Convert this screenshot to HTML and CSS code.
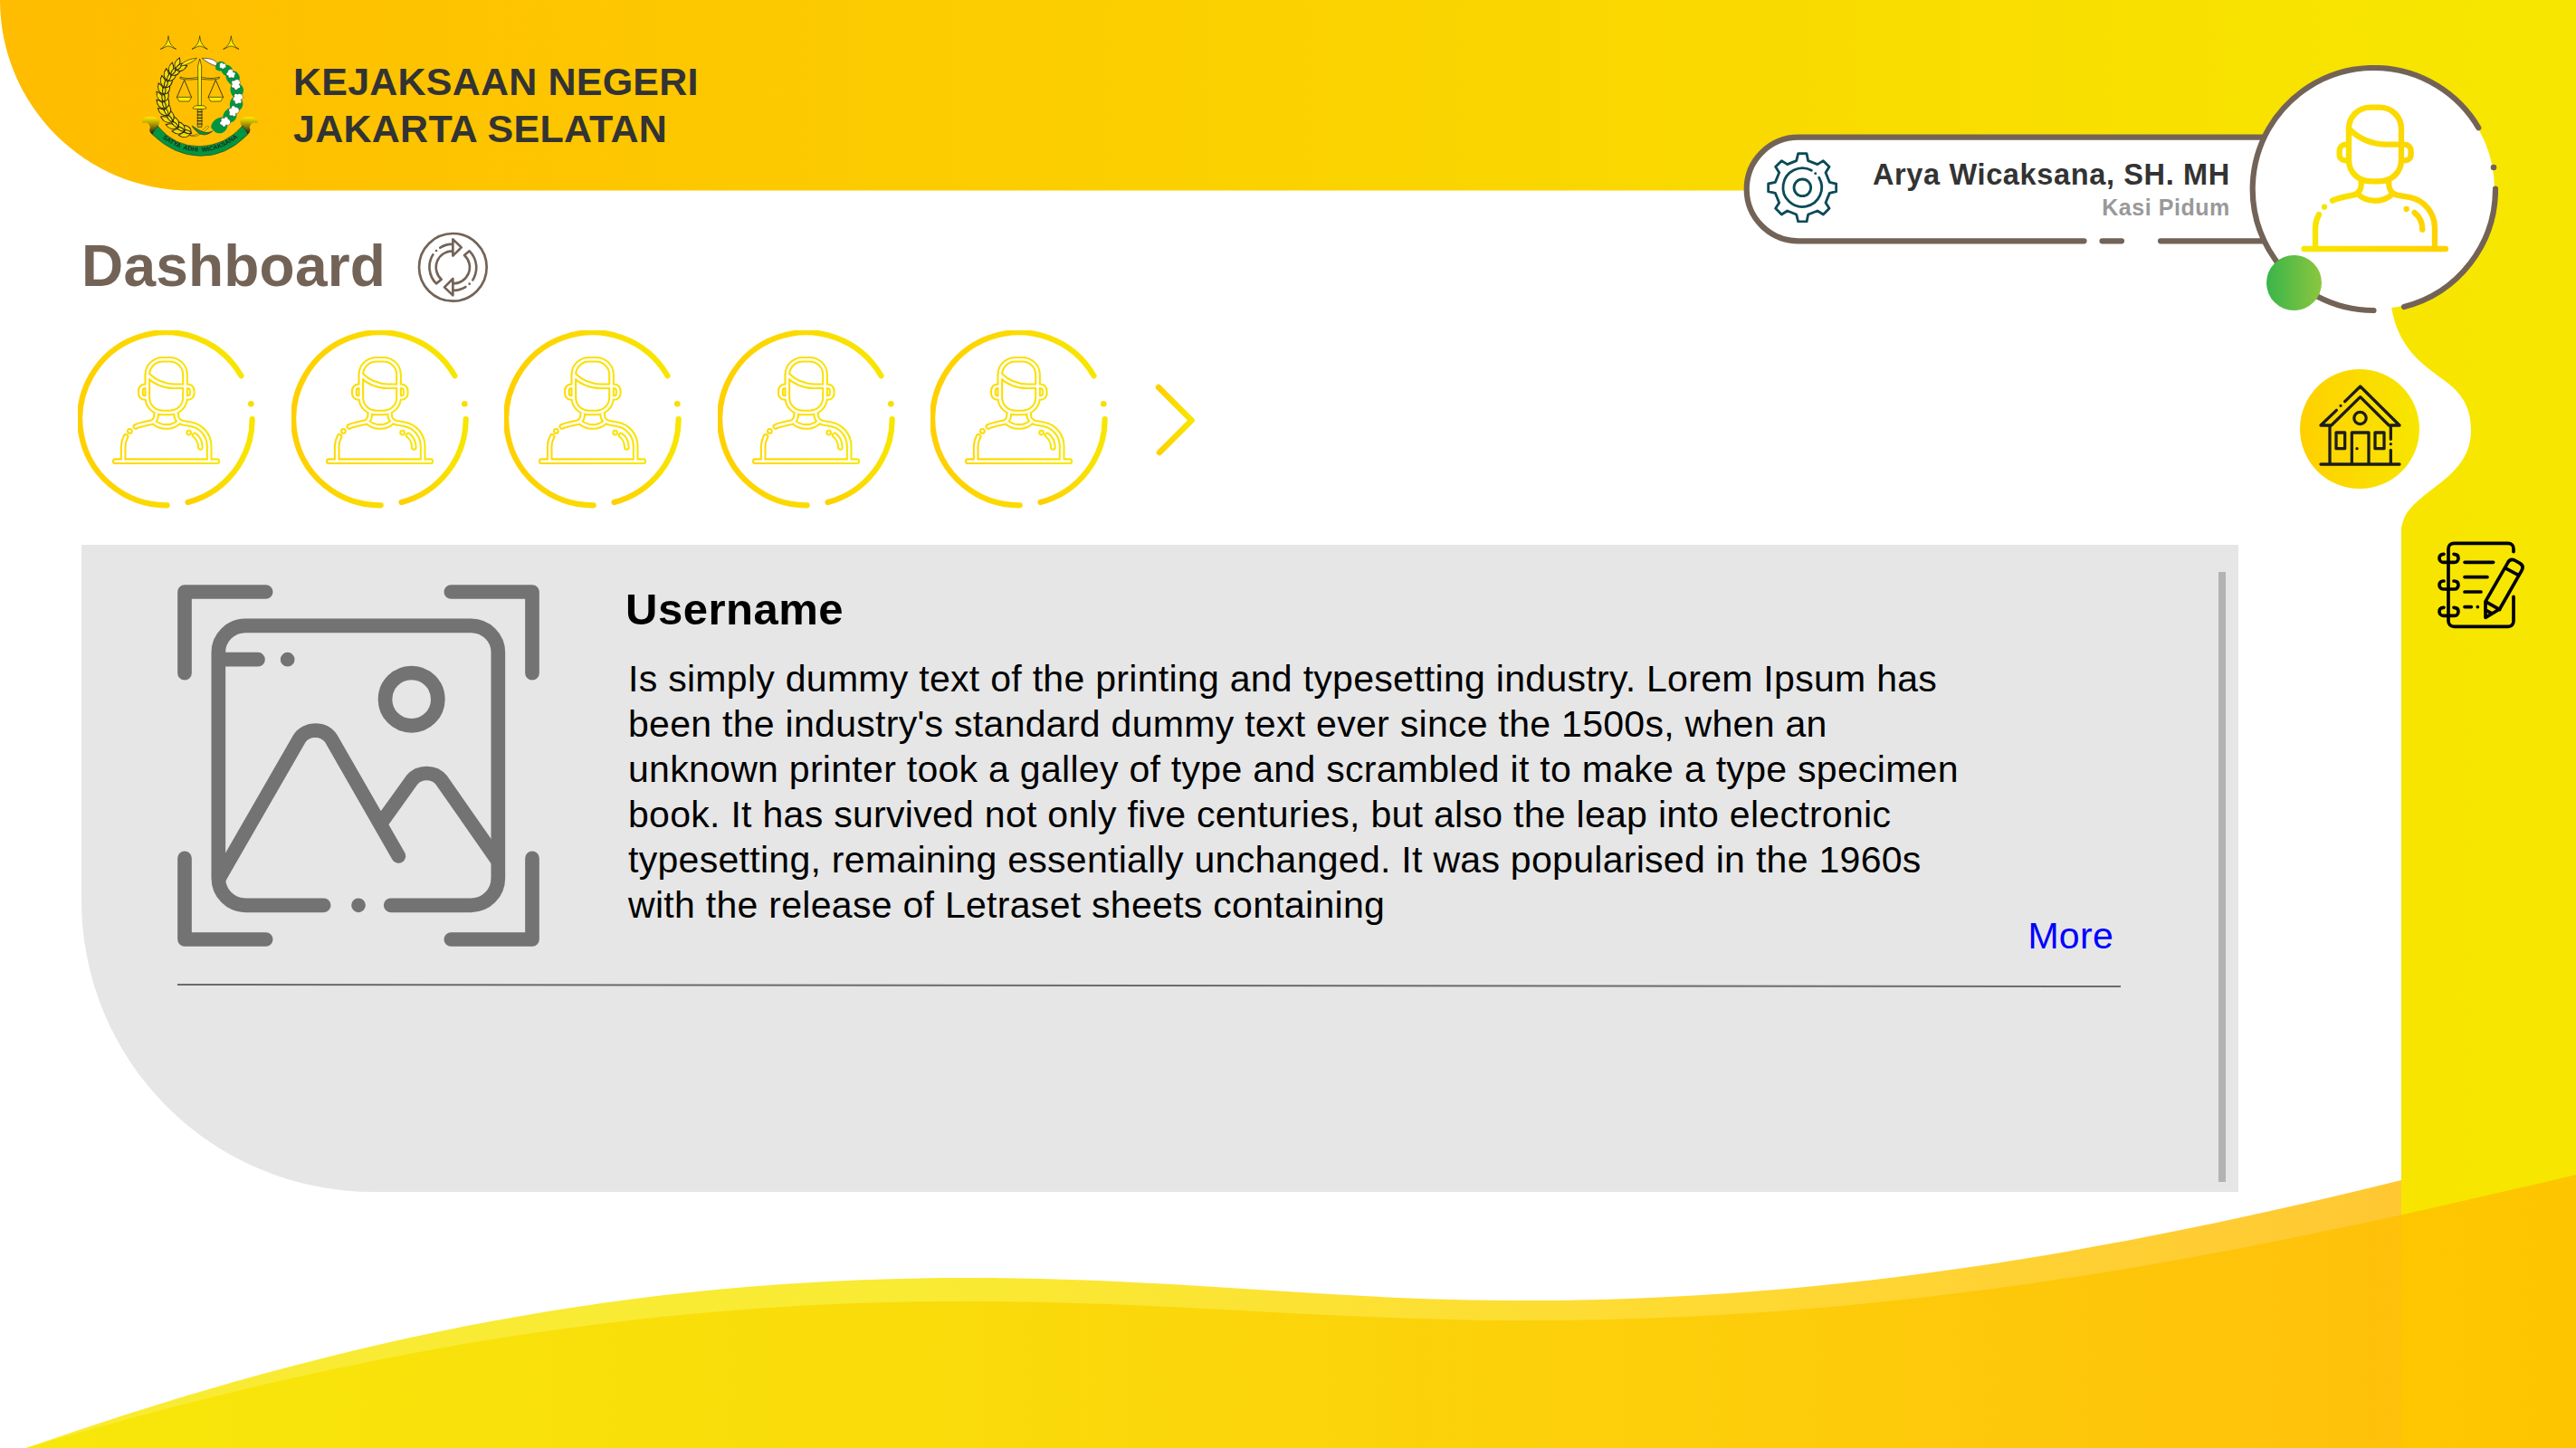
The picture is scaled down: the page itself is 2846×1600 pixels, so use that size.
FILE: index.html
```html
<!DOCTYPE html>
<html lang="id">
<head>
<meta charset="utf-8">
<title>Dashboard - Kejaksaan Negeri Jakarta Selatan</title>
<link rel="stylesheet" href="styles.css">
</head>
<body>
<svg class="backdrop" viewBox="0 0 2846 1600" aria-hidden="true">
  <defs>
    <linearGradient id="g-head" gradientUnits="userSpaceOnUse" x1="0" y1="0" x2="2750" y2="0"><stop offset="0" stop-color="#ffbc00"/><stop offset="1" stop-color="#f7e600"/></linearGradient>
    <linearGradient id="g-wave" gradientUnits="userSpaceOnUse" x1="29" y1="0" x2="2800" y2="0"><stop offset="0" stop-color="#f7e600"/><stop offset="1" stop-color="#ffbd00"/></linearGradient>
    <linearGradient id="g-back" gradientUnits="userSpaceOnUse" x1="29" y1="0" x2="2653" y2="0"><stop offset="0" stop-color="#f7e600"/><stop offset=".38" stop-color="#f8e500"/><stop offset=".71" stop-color="#fed000"/><stop offset="1" stop-color="#ffba00"/></linearGradient>
    <linearGradient id="g-ring"><stop offset="0" stop-color="#ffd000"/><stop offset="1" stop-color="#f7e600"/></linearGradient>
    <linearGradient id="g-small" gradientUnits="userSpaceOnUse" x1="300" y1="0" x2="800" y2="0"><stop offset="0" stop-color="#ffd800"/><stop offset="1" stop-color="#f7e600"/></linearGradient>
    <linearGradient id="g-big" gradientUnits="userSpaceOnUse" x1="310" y1="0" x2="790" y2="0"><stop offset="0" stop-color="#f7e600"/><stop offset="1" stop-color="#ffd000"/></linearGradient>
    <g id="person">
      <path d="M465 276C465 235 497 205 537 205H567C607 205 639 235 639 276V380C639 420 607 450 567 450H537C497 450 465 420 465 380ZM465 276C505 315 545 328 590 328H639M465 328H455C443 328 434 337 434 350V362C434 374 443 381 455 381H465M639 328H650C662 328 671 337 671 350V362C671 374 662 381 650 381H639M506 455C508 475 497 494 478 496C450 502 430 505 411 514M598 455C596 475 607 492 630 497L665 503C715 512 750 555 750 605V672M494 492C525 522 580 522 610 492M366 560C358 575 354 590 354 605V672M384 535h.1M656 542h.1M683 554C701 568 709 587 709 610M317 674H786"/>
    </g>
    <symbol id="user" viewBox="0 0 196 197">
      <g fill="none" stroke="url(#g-ring)" stroke-width="6.200" stroke-linecap="round">
        <path d="M98.700 193.300A95.500 95.500 0 1 1 180.500 50.200"/>
        <path d="M192.700 98A95.500 95.500 0 0 1 121.500 190"/>
      </g>
      <circle cx="191.300" cy="81.200" r="3.300" fill="#fbdc00"/>
      <svg x="35.800" y="26" width="124" height="124" viewBox="294 179 517 517">
        <g fill="none" stroke-linecap="round" stroke-linejoin="round">
          <use href="#person" stroke="url(#g-small)" stroke-width="28"/>
          <use href="#person" stroke="#fff" stroke-width="11"/>
        </g>
      </svg>
    </symbol>
  </defs>
  <path fill="url(#g-back)" opacity=".8" d="M29 1600C400 1470 720 1412 1069 1412C1300 1412 1460 1437 1690 1437C2060 1437 2400 1367 2653 1304V1600Z"/>
  <path fill="url(#g-head)" d="M0 0H2846V1600H2653V583C2654 580 2655 573 2659 567C2668 554 2684 543 2697 533C2718 516 2730 500 2730 475C2730 453 2722 437 2704 423C2684 407 2650 390 2642 339V210.500H210C94 210.500 0 116 0 0Z"/>
  <path fill="url(#g-wave)" opacity=".8" d="M29 1600C400 1490 720 1438 1069 1438C1300 1438 1460 1459 1690 1459C2130 1459 2500 1380 2846 1298V1600Z"/>
</svg>

<header class="header">
  <div class="brand">
    <svg class="emblem" viewBox="48 58 390 402" role="img" aria-label="Lambang Kejaksaan">
      <defs>
        <linearGradient id="g-roll" x1="0" y1="0" x2="0" y2="1"><stop offset="0" stop-color="#ffed00"/><stop offset=".35" stop-color="#b9a400"/><stop offset="1" stop-color="#111"/></linearGradient>
        <path id="star" d="M0-24C2-6 6 8 26 20C12 15 8 10 0 10S-12 15-26 20C-6 8-2-6 0-24Z" fill="#ffed00" stroke="#222" stroke-width="2"/>
        <g id="grain" fill="#f5dc00" stroke="#222" stroke-width="3">
          <path d="M0 0C-17-4-24-18-20-36C-6-28 2-16 0 0Z"/><path d="M0 0C17-4 22-18 16-36C3-28-3-16 0 0Z"/><path d="M0 2C-7-8-6-20 0-30C6-20 7-8 0 2Z"/>
        </g>
        <g id="cotton">
          <path d="M0-21C20-20 27-3 22 14C11 25-11 25-22 14C-27-3-20-20 0-21Z" fill="#009640"/>
        </g>
        <path id="boll" d="M-8-14C-3-17 2-14 3-9C8-15 16-9 12-3C18 1 14 10 7 7C5 15-3 14-5 8C-11 12-17 5-12 0C-16-5-13-13-8-14Z" fill="#fff" stroke="#222" stroke-width="1"/>
        <path id="motto" d="M98 381Q166 444 243 444T388 379"/>
      </defs>
      <use href="#star" x="138" y="84"/><use href="#star" x="242" y="84"/><use href="#star" x="346" y="84"/>
      <use href="#grain" transform="translate(213 382) rotate(-72)"/>
      <use href="#grain" transform="translate(191 375) rotate(-62)"/>
      <use href="#grain" transform="translate(170 362) rotate(-50)"/>
      <use href="#grain" transform="translate(151 344) rotate(-38)"/>
      <use href="#grain" transform="translate(137 323) rotate(-26)"/>
      <use href="#grain" transform="translate(128 301) rotate(-16)"/>
      <use href="#grain" transform="translate(123 278) rotate(-6)"/>
      <use href="#grain" transform="translate(123 254) rotate(4)"/>
      <use href="#grain" transform="translate(127 231) rotate(14)"/>
      <use href="#grain" transform="translate(135 209) rotate(24)"/>
      <use href="#grain" transform="translate(147 189) rotate(34)"/>
      <use href="#grain" transform="translate(163 172) rotate(46)"/>
      <path d="M178 160C190 142 210 136 232 134C218 148 200 156 178 160Z" fill="#ffe600" stroke="#222" stroke-width="2"/>
      <use href="#cotton" transform="translate(312 160) scale(.75)"/>
      <use href="#cotton" transform="translate(333 174) rotate(45) scale(.8)"/>
      <use href="#cotton" transform="translate(353 198) rotate(55)"/>
      <use href="#cotton" transform="translate(366 240) rotate(80)"/>
      <use href="#cotton" transform="translate(364 286) rotate(100)"/>
      <use href="#cotton" transform="translate(343 325) rotate(125)"/>
      <use href="#cotton" transform="translate(309 358) rotate(140) scale(1.150)"/>
      <path d="M250 134C270 134 290 136 300 150L296 160C278 154 264 146 250 134Z" fill="#fff" stroke="#222" stroke-width="2"/>
      <use href="#boll" transform="translate(318 160) scale(.75)"/>
      <use href="#boll" transform="translate(345 187) rotate(30)"/>
      <use href="#boll" transform="translate(361 222) rotate(70) scale(1.150)"/>
      <use href="#boll" transform="translate(367 268) rotate(90) scale(1.200)"/>
      <use href="#boll" transform="translate(353 309) rotate(115) scale(1.200)"/>
      <use href="#boll" transform="translate(325 344) rotate(140) scale(1.150)"/>
      <path d="M268 358C250 374 236 392 210 390C222 397 245 392 272 362Z" fill="#ffe600" stroke="#222" stroke-width="1.500"/>
      <path d="M216 358C236 386 256 398 284 376C262 386 250 380 216 358Z" fill="#009640" stroke="#222" stroke-width="2"/>
      <path d="M191 206L166 264M191 206L215 264M295 206L270 264M295 206L320 264" stroke="#222" stroke-width="2.500" fill="none"/>
      <path d="M177 196C200 204 220 200 242 196C264 200 284 204 307 196V201C284 208 264 204 242 203C220 204 200 208 177 201Z" fill="#e3cf00" stroke="#222" stroke-width="2"/>
      <path d="M166 263H215L207 277H174ZM270 263H320L311 277H278Z" fill="#ffed00" stroke="#222" stroke-width="2"/>
      <path d="M242 136L248 160L247 292H237L236 160Z" fill="#ffed00" stroke="#222" stroke-width="2"/>
      <path d="M219 300C222 290 236 291 242 291C250 291 260 290 264 300C256 304 228 304 219 300Z" fill="#ffed00" stroke="#222" stroke-width="2"/>
      <path d="M235 303H249V362H235Z" fill="#d6b800" stroke="#222" stroke-width="2"/>
      <path d="M233 312H251M233 322H251M233 332H251M233 342H251M233 352H251" stroke="#222" stroke-width="3"/>
      <path d="M50 348C52 332 62 328 78 328C98 328 108 334 110 344L92 388C78 386 72 374 78 364C76 350 62 346 62 348ZM435 348C433 332 423 328 407 328C387 328 377 334 375 344L393 388C407 386 413 374 407 364C409 350 423 346 423 348Z" fill="url(#g-roll)"/>
      <path d="M102 358Q160 428 243 426T384 358L402 386Q330 460 243 458T84 386Z" fill="#009640" stroke="#222" stroke-width="1.500"/>
      <text class="motto"><textPath href="#motto" startOffset="50%" text-anchor="middle">SATYA  ADHI  WICAKSANA</textPath></text>
    </svg>
    <div class="office"><span class="org">KEJAKSAAN NEGERI</span><span class="city">JAKARTA SELATAN</span></div>
  </div>
  <div class="profile">
    <svg class="profile-frame" viewBox="1926 72 834 276" aria-hidden="true">
      <path d="M2510 151.700H1987A57.300 57.300 0 0 0 1987 266.300H2510Z" fill="#fff"/>
      <g fill="none" stroke="#736357" stroke-width="6.200" stroke-linecap="round">
        <path d="M2510 151.700H1987A57.300 57.300 0 0 0 1987 266.300H2302.500M2322.500 266.300H2344M2387 266.300H2510"/>
      </g>
      <circle cx="2623.500" cy="209" r="132.500" fill="#fff"/>
      <path d="M2622.500 343A134 134 0 1 1 2738.300 141.200M2757 208.500A134 134 0 0 1 2656 339" fill="none" stroke="#736357" stroke-width="6.200" stroke-linecap="round"/>
      <circle cx="2755" cy="185" r="3.300" fill="#736357"/>
    </svg>
    <svg class="gear" viewBox="95 83 236 236" fill="none" stroke="#0a4a58" stroke-width="8.500" stroke-linejoin="round" stroke-linecap="round">
      <path d="M193 112L199 88H227L232 112L263 124L282 112L302 132L290 151L303 183L325 188V214L303 219L290 251L302 270L282 290L263 278L232 290L227 314H199L193 290L163 278L144 290L124 270L136 251L123 219L100 214V188L123 183L136 151L124 132L144 112L163 124Z"/>
      <path d="M243 144A64 64 0 1 0 268 168M256 154h.1"/>
      <circle cx="213" cy="201" r="28"/>
    </svg>
    <div class="who"><span class="name">Arya Wicaksana, SH. MH</span><span class="role">Kasi Pidum</span></div>
    <svg class="avatar" viewBox="300 185 505 505" fill="none" stroke="url(#g-big)" stroke-width="19" stroke-linecap="round" stroke-linejoin="round"><use href="#person"/></svg>
    <span class="online"></span>
  </div>
</header>

<div class="layout">
  <main class="content">
    <div class="title">
      <h1>Dashboard</h1>
      <svg class="refresh" viewBox="1205 46 236 236" fill="none" stroke="#736357" stroke-width="8" stroke-linecap="round" stroke-linejoin="round">
        <defs><path id="half" d="M1323 71L1351 98L1323 126ZM1323 110A54 54 0 0 0 1285 204L1268 218A78 78 0 0 1 1257 122M1268 109h.1M1281 99Q1300 87 1323 87"/></defs>
        <circle cx="1323" cy="164" r="112"/>
        <use href="#half"/><use href="#half" transform="rotate(180 1323 164)"/>
      </svg>
    </div>
    <div class="users">
      <svg class="user"><use href="#user"/></svg>
      <svg class="user"><use href="#user"/></svg>
      <svg class="user"><use href="#user"/></svg>
      <svg class="user"><use href="#user"/></svg>
      <svg class="user"><use href="#user"/></svg>
      <svg class="next" viewBox="0 0 44 80"><path d="M4 4L40.500 40.500L5 76" fill="none" stroke="url(#g-ring)" stroke-width="6.500" stroke-linecap="round" stroke-linejoin="round"/></svg>
    </div>
    <section class="card">
      <div class="card-main">
        <div class="post">
          <svg class="picture" viewBox="137 108 1200 1200" fill="none" stroke="#737373" stroke-width="47" stroke-linecap="round" stroke-linejoin="round">
            <path d="M161 401V132H430M1044 132H1313V401M161 1015V1284H430M1044 1284H1313V1015"/>
            <path d="M622 1171H363C313 1171 273 1131 273 1081V333C273 284 313 244 363 244H1110C1160 244 1200 284 1200 333V1081C1200 1131 1160 1171 1110 1171H844M737 1171h.1M285 356H404M502 356h.1"/>
            <path d="M277 1078L541 619C564 582 623 582 647 619L870 1008M818 890L914 756C938 726 988 726 1012 756L1198 1022"/>
            <circle cx="913" cy="488" r="87.500"/>
          </svg>
          <div class="post-text">
            <h2>Username</h2>
            <p>Is simply dummy text of the printing and typesetting industry. Lorem Ipsum has<br>
            been the industry's standard dummy text ever since the 1500s, when an<br>
            unknown printer took a galley of type and scrambled it to make a type specimen<br>
            book. It has survived not only five centuries, but also the leap into electronic<br>
            typesetting, remaining essentially unchanged. It was popularised in the 1960s<br>
            with the release of Letraset sheets containing</p>
            <a class="more">More</a>
          </div>
        </div>
        <svg class="divider" viewBox="0 0 2147 4"><path d="M0 1L2147 3" stroke="#6b6b6b" stroke-width="2"/></svg>
      </div>
      <div class="scrollbar"></div>
    </section>
  </main>
  <nav class="side">
    <a class="home">
      <svg viewBox="185 280 273 276" fill="none" stroke="#1d1d1b" stroke-width="9.800" stroke-linecap="round" stroke-linejoin="round">
        <path d="M271 339L322 289L452 418H417L322 324L226 418H191L243 368M257 353h.1M221 420V547M423 420V464M423 480h.1M423 500V547M191 547H452M294 547V442H350V547M311 495h.1M242 442H271V495H242ZM371 442H401V495H371Z"/>
        <circle cx="321.500" cy="394" r="20"/>
      </svg>
    </a>
    <a class="notes">
      <svg viewBox="578 800 294 296" fill="none" stroke="#000" stroke-width="11" stroke-linecap="round" stroke-linejoin="round">
        <defs><path id="loop" d="M602 846H600C592 846 587 852 587 859S592 873 600 873H637C645 873 650 867 650 859S645 846 635 846"/></defs>
        <path d="M833 838V828C833 817 826 810 815 810H636C624 810 617 818 617 828V1068C617 1079 625 1086 636 1086H815C826 1086 833 1079 833 1068V987M671 873H766M671 922H746M671 971H725M671 1021H693M714 1021h.1"/>
        <use href="#loop"/><use href="#loop" y="89"/><use href="#loop" y="177"/>
        <path d="M740 1003L813 876C818 865 826 862 836 866L854 876C864 882 865 891 860 900L787 1028L740 1056ZM740 1003L787 1030M805 892L850 916M742 1032L760 1042"/>
      </svg>
    </a>
  </nav>
</div>
</body>
</html>
```
FILE: styles.css
```css
* { box-sizing: border-box; }
body {
  margin: 0;
  width: 2846px;
  height: 1600px;
  position: relative;
  overflow: hidden;
  background: #fff;
  color: #000;
  font-family: "Liberation Sans", Arial, sans-serif;
}
svg { display: block; flex: none; }
h1, h2, p { margin: 0; }

.backdrop { position: absolute; inset: 0; width: 2846px; height: 1600px; }

.header {
  position: relative;
  z-index: 2;
  height: 210px;
  padding-left: 156px;
  display: flex;
  justify-content: space-between;
  align-items: flex-start;
}
.brand { display: flex; gap: 38px; padding-top: 39px; }
.emblem { width: 130px; height: 134px; }
.motto { font-size: 21px; fill: #1d2b1d; font-weight: 700; white-space: pre; }
.office {
  padding-top: 25px;
  display: flex;
  flex-direction: column;
  font-size: 43px;
  font-weight: 700;
  line-height: 52px;
  color: #333;
}
.org { letter-spacing: .2px; }
.city { letter-spacing: .25px; }

.profile {
  position: relative;
  width: 834px;
  height: 276px;
  margin: 72px 86px 0 0;
  display: flex;
  align-items: flex-start;
}
.profile-frame { position: absolute; inset: 0; width: 834px; height: 276px; }
.gear, .avatar, .who { position: relative; }
.gear { width: 78.700px; height: 78.700px; margin: 95.700px 0 0 25.700px; }
.who {
  width: 433.500px;
  margin-top: 102px;
  display: flex;
  flex-direction: column;
  align-items: flex-end;
  font-weight: 700;
  color: #333;
}
.name { font-size: 32.500px; line-height: 38px; letter-spacing: .64px; }
.role { font-size: 25px; line-height: 34px; letter-spacing: .55px; color: #999; }
.avatar { width: 168.300px; height: 168.300px; margin: 39.700px 0 0 76.100px; }
.online {
  position: absolute;
  left: 577.500px;
  top: 210px;
  width: 61px;
  height: 61px;
  border-radius: 50%;
  background: linear-gradient(90deg, #39b54a, #8cc63f);
}

.layout { position: relative; display: flex; }
.content { padding: 46px 0 0 86px; }
.title { display: flex; gap: 38px; align-items: flex-start; padding-left: 4px; }
h1 { font-size: 64px; line-height: 76px; width: 333px; letter-spacing: .2px; color: #736357; white-space: nowrap; }
.refresh { width: 78.700px; height: 78.700px; }
.users { display: flex; align-items: center; gap: 39.600px; margin-top: 30px; }
.user { width: 196px; height: 197px; }
.next { width: 44px; height: 80px; margin-left: 12px; margin-top: 2px; }

.card {
  margin: 40.500px 0 0 4px;
  width: 2383px;
  height: 714.500px;
  background: #e6e6e6;
  border-bottom-left-radius: 322px;
  display: flex;
  justify-content: space-between;
  padding: 30px 14px 0 106px;
}
.card-main { padding-top: 14px; width: 2147px; }
.post { display: flex; gap: 98px; height: 441px; }
.picture { width: 400px; height: 400px; }
.post-text { flex: 1; display: flex; flex-direction: column; }
h2 { font-size: 49px; line-height: 54px; letter-spacing: .5px; margin-left: -3px; }
p {
  margin-top: 25px;
  font-size: 41px;
  line-height: 50px;
  letter-spacing: .29px;
  white-space: nowrap;
}
.more { align-self: flex-end; margin: -16px 8px 0 0; font-size: 41px; line-height: 50px; letter-spacing: .3px; color: #00f; }
.divider { width: 2147px; height: 4px; }
.scrollbar { width: 8px; height: 674px; background: #b3b3b3; }

.side { padding: 198px 0 0 68px; }
.home {
  width: 132px;
  height: 132px;
  border-radius: 50%;
  background: linear-gradient(90deg, #ffd000, #f7e600);
  display: flex;
  align-items: center;
  justify-content: center;
}
.home svg { width: 91px; height: 92px; margin-top: -8px; }
.notes { display: block; margin: 57px 0 0 151px; }
.notes svg { width: 98px; height: 98.700px; }
```
